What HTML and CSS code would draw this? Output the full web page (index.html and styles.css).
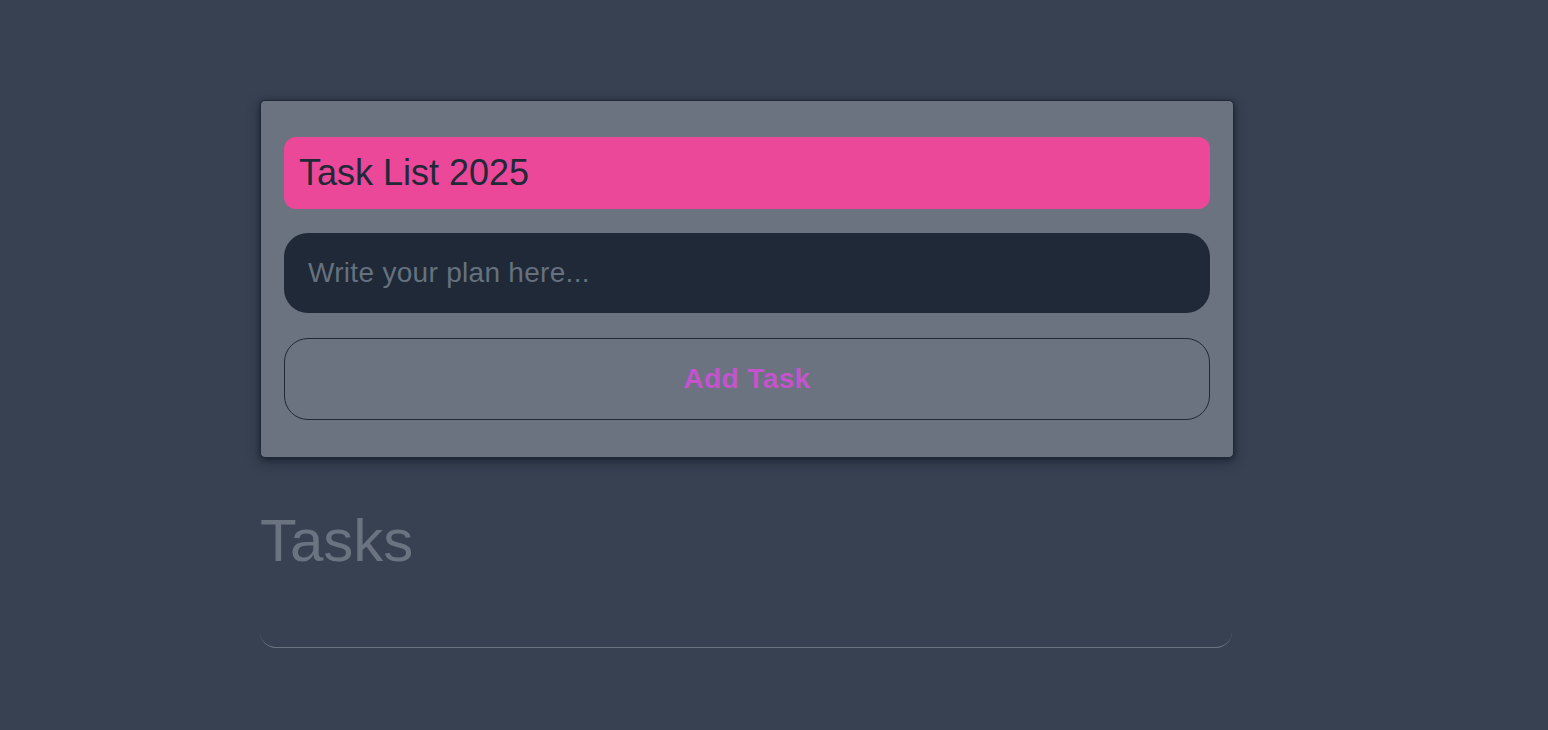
FILE: index.html
```html
<!DOCTYPE html>
<html>
<head>
<meta charset="utf-8">
<link rel="stylesheet" href="styles.css">
</head>
<body>
<main class="wrap">
  <section class="card">
    <h1 class="title">Task List 2025</h1>
    <input class="plan" type="text" placeholder="Write your plan here...">
    <button class="add">Add Task</button>
  </section>
  <h2 class="tasks-head">Tasks</h2>
  <div class="task-list"></div>
</main>
</body>
</html>
```
FILE: styles.css
```css
html, body {
  margin: 0;
  padding: 0;
  background: #374151;
  font-family: "Liberation Sans", Arial, sans-serif;
}
.wrap {
  width: 974px;
  margin-left: 260px;
  padding-top: 100px;
}
.card {
  box-sizing: border-box;
  height: 358px;
  background: #6b7280;
  border: 1px solid #1f2937;
  border-radius: 5px;
  box-shadow: 0 4px 12px rgba(17, 24, 39, 0.5), 0 1px 4px rgba(17,24,39,0.55);
  padding: 36px 23px 0 23px;
  display: flex;
  flex-direction: column;
}
.title {
  margin: 0;
  height: 72px;
  box-sizing: border-box;
  background: #ec4899;
  border-radius: 12px;
  color: #1f2937;
  font-size: 36px;
  font-weight: 400;
  line-height: 72px;
  padding-left: 15px;
}
.plan {
  margin-top: 24px;
  height: 80px;
  box-sizing: border-box;
  background: #1f2937;
  border: none;
  border-radius: 24px;
  padding: 0 24px;
  font-family: "Liberation Sans", Arial, sans-serif;
  font-size: 28px;
  letter-spacing: 0.3px;
  color: #e5e7eb;
  outline: none;
}
.plan::placeholder {
  color: #66717f;
}
.add {
  margin-top: 25px;
  height: 82px;
  box-sizing: border-box;
  background: transparent;
  border: 1px solid #1f2937;
  border-radius: 24px;
  font-family: "Liberation Sans", Arial, sans-serif;
  font-size: 28px;
  font-weight: 700;
  letter-spacing: 0.4px;
  color: #c453cd;
  padding: 0;
}
.tasks-head {
  margin: 53px 0 0 0;
  font-size: 60px;
  line-height: 60px;
  font-weight: 400;
  color: #6b7280;
}
.task-list {
  margin-top: 40px;
  height: 36px;
  border-bottom: 1px solid #6b7280;
  border-radius: 0 0 16px 16px;
  width: 972px;
}
```
